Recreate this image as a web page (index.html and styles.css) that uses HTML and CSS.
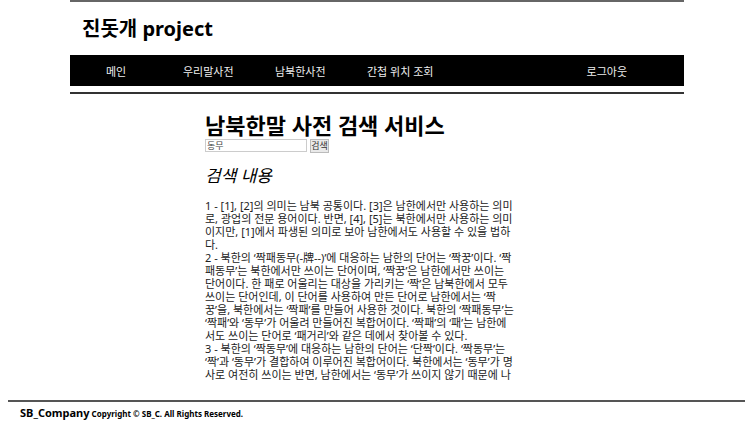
FILE: index.html
```html
<!DOCTYPE html>
<html lang="ko">
<head>
<meta charset="utf-8">
<title>진돗개 project</title>
<link rel="stylesheet" href="styles.css">
</head>
<body>
<div class="page">
  <header class="header">
    <h1 class="brand">진돗개 project</h1>
    <nav class="nav">
      <a href="#">메인</a>
      <a href="#">우리말사전</a>
      <a href="#">남북한사전</a>
      <a href="#">간첩 위치 조회</a>
      <a href="#" class="logout">로그아웃</a>
    </nav>
  </header>
  <main class="content">
    <h2 class="title">남북한말 사전 검색 서비스</h2>
    <form class="search">
      <input type="text" class="query" aria-label="검색어" value="동무">
      <button type="button" class="submit">검색</button>
    </form>
    <h3 class="subtitle">검색 내용</h3>
    <p class="result">1 - [1], [2]의 의미는 남북 공통이다. [3]은 남한에서만 사용하는 의미<br>로, 광업의 전문 용어이다. 반면, [4], [5]는 북한에서만 사용하는 의미<br>이지만, [1]에서 파생된 의미로 보아 남한에서도 사용할 수 있을 법하<br>다.</p>
    <p class="result">2 - 북한의 ‘짝패동무(-牌--)’에 대응하는 남한의 단어는 ‘짝꿍’이다. ‘짝<br>패동무’는 북한에서만 쓰이는 단어이며, ‘짝꿍’은 남한에서만 쓰이는<br>단어이다. 한 패로 어울리는 대상을 가리키는 ‘짝’은 남북한에서 모두<br>쓰이는 단어인데, 이 단어를 사용하여 만든 단어로 남한에서는 ‘짝<br>꿍’을, 북한에서는 ‘짝패’를 만들어 사용한 것이다. 북한의 ‘짝패동무’는<br>‘짝패’와 ‘동무’가 어울려 만들어진 복합어이다. ‘짝패’의 ‘패’는 남한에<br>서도 쓰이는 단어로 ‘패거리’와 같은 데에서 찾아볼 수 있다.</p>
    <p class="result">3 - 북한의 ‘짝동무’에 대응하는 남한의 단어는 ‘단짝’이다. ‘짝동무’는<br>‘짝’과 ‘동무’가 결합하여 이루어진 복합어이다. 북한에서는 ‘동무’가 명<br>사로 여전히 쓰이는 반면, 남한에서는 ‘동무’가 쓰이지 않기 때문에 나</p>
  </main>
</div>
<footer class="footer"><strong class="company">SB_Company</strong> Copyright © SB_C. All Rights Reserved.</footer>
</body>
</html>
```
FILE: styles.css
```css
* { box-sizing: border-box; }
body {
  margin: 0 5px 0 8px;
  background: #fff;
  color: #000;
  font-family: "Noto Sans", "Noto Sans CJK KR", sans-serif;
  font-size: 11px;
}
.page { margin: 0 61px 0 62px; }
.header {
  border-top: 2px solid #666;
  border-bottom: 2px solid #333;
  padding-bottom: 6px;
}
.brand {
  margin: 0;
  padding-left: 12px;
  font-size: 20px;
  line-height: 53px;
}
.nav {
  display: flex;
  height: 31px;
  align-items: center;
  background: #000;
  padding: 0 57px 0 36px;
}
.nav a { color: #eee; text-decoration: none; white-space: nowrap; }
.nav a:nth-child(1) { flex: 0 0 77px; }
.nav a:nth-child(2), .nav a:nth-child(3) { flex: 0 0 92px; }
.nav .logout { margin-left: auto; }
.content { padding: 17px 0 0 135px; }
.title { margin: 0; font-size: 22px; line-height: 28px; }
.search { display: flex; gap: 3px; }
.query {
  width: 102px;
  height: 13px;
  border: 1px solid #ccc;
  padding: 0 1px;
  color: #444;
  font-family: inherit;
  font-size: 9px;
  line-height: 10px;
}
.submit {
  width: 19px;
  height: 14px;
  border: 1px solid #bbb;
  padding: 0;
  background: #e9e9e9;
  color: #333;
  font-family: inherit;
  font-size: 9px;
  line-height: 12px;
}
.subtitle {
  margin: 12px 0;
  font-size: 17px;
  font-style: italic;
  font-weight: 400;
  line-height: 22px;
}
.result { margin: 0; color: #222; line-height: 13px; white-space: nowrap; }
.footer {
  margin-top: 19px;
  border-top: 2px solid #555;
  padding-left: 12px;
  font-size: 8px;
  font-weight: 700;
  line-height: 22px;
}
.company { font-size: 11px; font-weight: 700; }
```
